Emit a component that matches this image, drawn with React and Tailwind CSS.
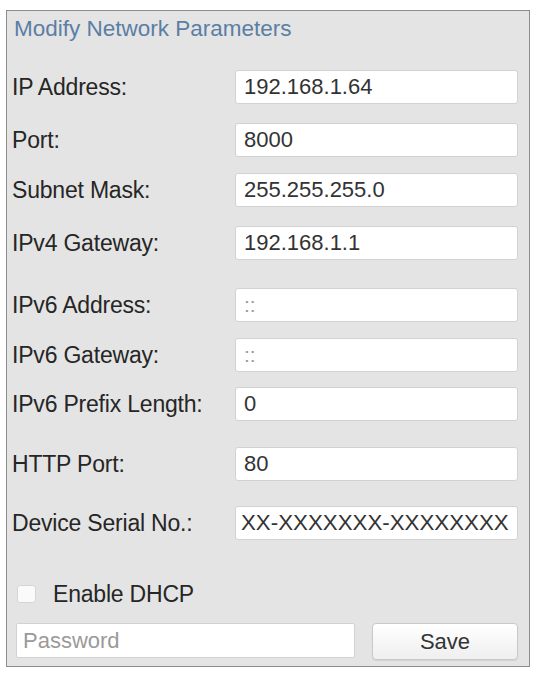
import React from 'react';

const rows = [
  { label: 'IP Address:', value: '192.168.1.64', mt: 'mt-[23px]' },
  { label: 'Port:', value: '8000', mt: 'mt-[19px]' },
  { label: 'Subnet Mask:', value: '255.255.255.0', mt: 'mt-[16px]' },
  { label: 'IPv4 Gateway:', value: '192.168.1.1', mt: 'mt-[19px]' },
  { label: 'IPv6 Address:', value: '::', mt: 'mt-[28px]', muted: true },
  { label: 'IPv6 Gateway:', value: '::', mt: 'mt-[16px]', muted: true },
  { label: 'IPv6 Prefix Length:', value: '0', mt: 'mt-[15px]' },
  { label: 'HTTP Port:', value: '80', mt: 'mt-[26px]' },
  { label: 'Device Serial No.:', value: 'XX-XXXXXXX-XXXXXXXX', mt: 'mt-[25px]', wide: true },
];

function FieldRow({ label, value, mt, muted, wide }) {
  return (
    <div className={`${mt} flex h-[34px] items-center pl-[5px] pr-[11px]`}>
      <label className="w-[223px] shrink-0 text-[23px] tracking-[-0.2px] text-[#262626]">{label}</label>
      <input
        readOnly
        value={value}
        className={`h-full min-w-0 flex-1 rounded-[3px] border border-[#d2d2d2] bg-white outline-none ${
          muted
            ? 'pl-[8px] text-[21px] text-[#9a9a9a]'
            : wide
              ? 'pl-[5px] text-[22.3px] text-[#333]'
              : 'pl-[8px] text-[22px] text-[#333]'
        }`}
      />
    </div>
  );
}

export default function App() {
  return (
    <div className="min-h-screen bg-white pl-[6px] pt-[10px] font-['Liberation_Sans',Arial,sans-serif]">
      <div className="h-[657px] w-[524px] border border-[#8c8c8c] bg-[#e4e4e4]">
        <div className="flex h-[36px] items-center pl-[7px] text-[22.5px] text-[#5b7ea4]">
          Modify Network Parameters
        </div>

        {rows.map((r) => (
          <FieldRow key={r.label} {...r} />
        ))}

        <div className="mt-[42px] flex h-[24px] items-center pl-[10px]">
          <span className="h-[18px] w-[19px] rounded-[3px] border border-[#d6d6d6] bg-[#fafafa]" />
          <span className="ml-[17px] text-[23px] tracking-[-0.2px] text-[#262626]">Enable DHCP</span>
        </div>

        <div className="mt-[17px] flex items-start pl-[9px] pr-[11px]">
          <input
            readOnly
            placeholder="Password"
            className="h-[35px] w-[339px] rounded-[2px] border border-[#d2d2d2] bg-white pl-[6px] text-[22px] text-[#333] outline-none placeholder:text-[#9a9a9a]"
          />
          <button className="ml-[17px] h-[37px] flex-1 rounded-[4px] border border-[#c9c9c9] bg-gradient-to-b from-white to-[#efefef] text-[22px] text-[#333] shadow-[0_1px_1px_rgba(0,0,0,0.08)]">
            Save
          </button>
        </div>
      </div>
    </div>
  );
}
